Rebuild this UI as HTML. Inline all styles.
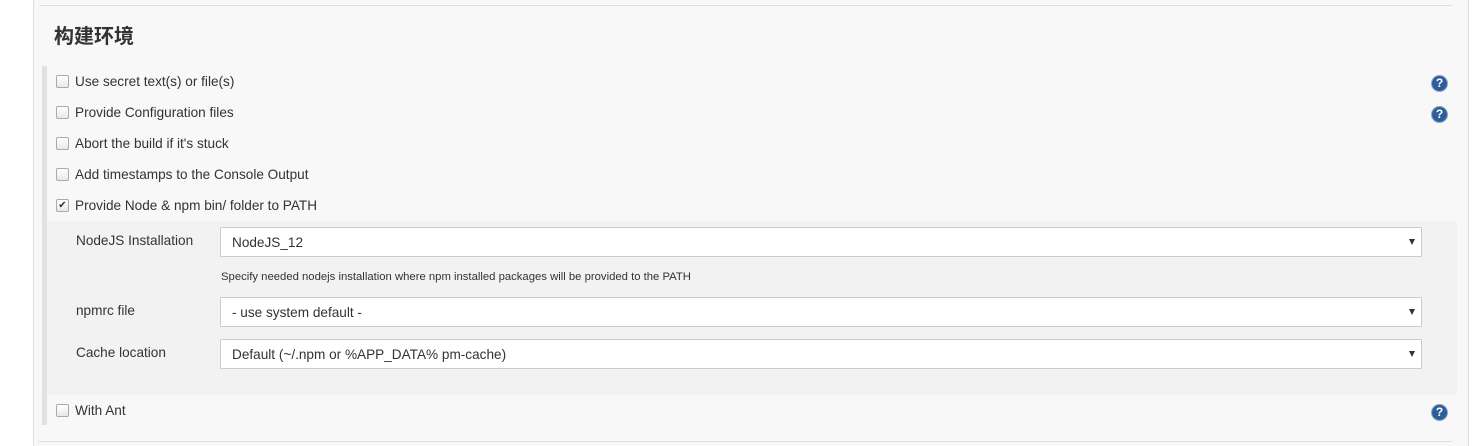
<!DOCTYPE html>
<html><head><meta charset="utf-8"><style>
body{margin:0;width:1476px;height:446px;background:#fff;position:relative;overflow:hidden;font-family:"Liberation Sans","Noto Sans CJK SC",sans-serif;color:#333;font-size:13.5px}
.pg{position:absolute;left:33px;top:0;width:1434px;height:446px;background:#f8f8f8;border-left:1px solid #ddd;border-right:1px solid #ddd}
.hl{position:absolute;height:1px;background:#ddd}
h2{position:absolute;left:54px;top:20px;margin:0;font-size:20px;font-weight:bold;color:#333}
.bar{position:absolute;left:42px;top:66px;width:5px;height:359px;background:#e2e2e2}
.nest{position:absolute;left:47px;top:221px;width:1410px;height:174px;background:#f2f2f2}
.cb{position:absolute;left:56px;width:11px;height:11px;border:1px solid #aaa;border-radius:2px;background:linear-gradient(#fff,#e8e8e8)}
.t{position:absolute;left:75px;font-size:13.6px;color:#333}
.lb{position:absolute;left:76px;font-size:13.6px}
.sel{position:absolute;left:220px;width:1202px;height:30px;border:1px solid #ccc;background:#fff;box-sizing:border-box}
.sel span{position:absolute;left:11px;top:7px;font-size:13.6px}
.sel i{position:absolute;right:6px;top:11px;width:0;height:0;border-left:3.5px solid transparent;border-right:3.5px solid transparent;border-top:6px solid #333}
.help{position:absolute;left:1431px;width:17px;height:17px;border-radius:50%;background:#2f5d9a;border:1px solid #8aa6cc;box-sizing:border-box;color:#fff;font-weight:bold;font-size:12px;line-height:15px;text-align:center}
</style></head><body>
<div class="pg"></div>
<div class="hl" style="left:39px;top:5px;width:1413px"></div>
<div class="hl" style="left:38px;top:441px;width:1414px"></div>
<h2>构建环境</h2>
<div class="bar"></div>
<div class="nest"></div>
<div class="cb" style="top:75px"></div><div class="t" style="top:74px">Use secret text(s) or file(s)</div>
<div class="cb" style="top:106px"></div><div class="t" style="top:105px">Provide Configuration files</div>
<div class="cb" style="top:137px"></div><div class="t" style="top:136px">Abort the build if it's stuck</div>
<div class="cb" style="top:168px"></div><div class="t" style="top:167px">Add timestamps to the Console Output</div>
<div class="cb" style="top:199px;font-size:10px;line-height:11px;text-align:center;color:#333">✔</div><div class="t" style="top:198px">Provide Node &amp; npm bin/ folder to PATH</div>
<div class="lb" style="top:233px">NodeJS Installation</div>
<div class="sel" style="top:227px"><span>NodeJS_12</span><i></i></div>
<div style="position:absolute;left:221px;top:271px;font-size:11.3px">Specify needed nodejs installation where npm installed packages will be provided to the PATH</div>
<div class="lb" style="top:303px">npmrc file</div>
<div class="sel" style="top:297px"><span>- use system default -</span><i></i></div>
<div class="lb" style="top:345px">Cache location</div>
<div class="sel" style="top:339px"><span>Default (~/.npm or %APP_DATA% pm-cache)</span><i></i></div>
<div class="cb" style="top:404px"></div><div class="t" style="top:403px">With Ant</div>
<div class="help" style="top:75px">?</div>
<div class="help" style="top:106px">?</div>
<div class="help" style="top:404px">?</div>
</body></html>
